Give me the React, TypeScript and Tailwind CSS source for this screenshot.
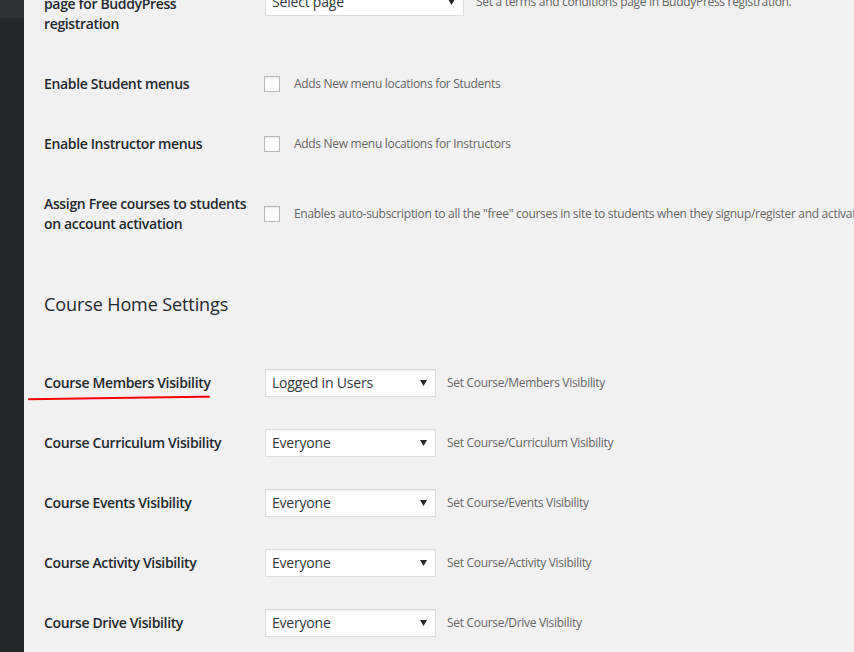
import React from "react";

const font = { fontFamily: '"Open Sans", "Noto Sans", sans-serif' };

function Select({ value, wide }: { value: string; wide?: boolean }) {
  return (
    <div
      className={`flex h-[28px] items-center justify-between border border-[#dddddd] bg-white pl-[6px] pr-[8px] text-[14px] text-[#32373c] shadow-[inset_0_1px_2px_rgba(0,0,0,0.07)] ${
        wide ? "w-[199px]" : "w-[171px]"
      }`}
    >
      <span className="-mt-[1px] tracking-[-0.2px]">{value}</span>
      <svg width="7" height="6" viewBox="0 0 7 6">
        <path d="M0 0h7L3.5 6z" fill="#23282d" />
      </svg>
    </div>
  );
}

function Checkbox() {
  return (
    <div className="-ml-[1px] h-[16px] w-[16px] shrink-0 border border-[#b4b9be] bg-white shadow-[inset_0_1px_2px_rgba(0,0,0,0.1)]" />
  );
}

function Label({ children }: { children: React.ReactNode }) {
  return (
    <div className="w-[221px] shrink-0 pr-[10px] text-[14px] font-semibold leading-[20px] text-[#23282d] tracking-[-0.35px]">
      {children}
    </div>
  );
}

function Desc({ children }: { children: React.ReactNode }) {
  return (
    <span className="whitespace-nowrap text-[12px] text-[#666666] tracking-[-0.3px]">
      {children}
    </span>
  );
}

const courseRows = [
  { label: "Course Members Visibility", value: "Logged in Users", desc: "Set Course/Members Visibility" },
  { label: "Course Curriculum Visibility", value: "Everyone", desc: "Set Course/Curriculum Visibility" },
  { label: "Course Events Visibility", value: "Everyone", desc: "Set Course/Events Visibility" },
  { label: "Course Activity Visibility", value: "Everyone", desc: "Set Course/Activity Visibility" },
  { label: "Course Drive Visibility", value: "Everyone", desc: "Set Course/Drive Visibility" },
];

export default function App() {
  return (
    <div className="flex h-[652px] w-[854px] overflow-hidden bg-[#f1f1f1]" style={font}>
      {/* admin sidebar */}
      <div className="flex w-[24px] shrink-0 flex-col bg-[#23282d]">
        <div className="h-[18px] bg-[#2f3439]" />
      </div>

      <div className="min-w-0 flex-1 pl-[20px]">
        {/* BuddyPress terms row, cut off at the top */}
        <div className="-mt-[46px] flex h-[100px] items-center">
          <Label>
            Terms and Conditions
            <br />
            page for BuddyPress
            <br />
            registration
          </Label>
          <div className="-mt-[4px] flex items-center gap-[12px]">
            <Select value="Select page" wide />
            <Desc>Set a terms and conditions page in BuddyPress registration.</Desc>
          </div>
        </div>

        <div className="flex h-[60px] items-center">
          <Label>Enable Student menus</Label>
          <div className="flex items-center gap-[14px]">
            <Checkbox />
            <Desc>Adds New menu locations for Students</Desc>
          </div>
        </div>

        <div className="flex h-[60px] items-center">
          <Label>Enable Instructor menus</Label>
          <div className="flex items-center gap-[14px]">
            <Checkbox />
            <Desc>Adds New menu locations for Instructors</Desc>
          </div>
        </div>

        <div className="flex h-[80px] items-center">
          <Label>
            Assign Free courses to students
            <br />
            on account activation
          </Label>
          <div className="flex items-center gap-[14px]">
            <Checkbox />
            <Desc>
              Enables auto-subscription to all the "free" courses in site to students when they
              signup/register and activate their account.
            </Desc>
          </div>
        </div>

        <h2 className="mt-[38px] h-[24px] text-[18px] leading-[24px] text-[#23282d] tracking-[-0.1px]">
          Course Home Settings
        </h2>

        <div className="mt-[37px]">
          {courseRows.map((row, i) => (
            <div key={row.label} className="flex h-[60px] items-center">
              <div className="relative">
                <Label>{row.label}</Label>
                {i === 0 && (
                  <svg
                    className="absolute left-[-16px] top-[22px]"
                    width="182"
                    height="6"
                    viewBox="0 0 182 6"
                  >
                    <path
                      d="M1 4.2 C40 3.6 80 3.2 120 2.6 S168 2 181 1.8"
                      stroke="#ff0000"
                      strokeWidth="2"
                      fill="none"
                      strokeLinecap="round"
                    />
                  </svg>
                )}
              </div>
              <div className="flex items-center gap-[11px]">
                <Select value={row.value} />
                <Desc>{row.desc}</Desc>
              </div>
            </div>
          ))}
        </div>
      </div>
    </div>
  );
}
